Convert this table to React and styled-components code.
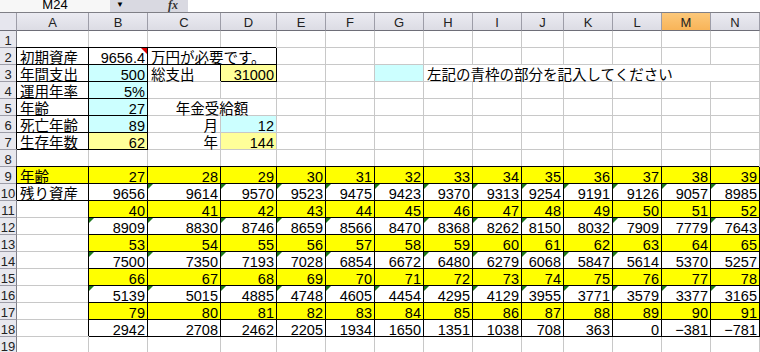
import React from 'react';
import styled, { createGlobalStyle, css } from 'styled-components';

const GlobalStyle = createGlobalStyle`
  html, body {
    margin: 0;
    padding: 0;
    background: #fff;
    overflow: hidden;
  }
  body {
    font-family: "Liberation Sans", "Noto Sans CJK JP", sans-serif;
  }
`;

const COLS = ['A', 'B', 'C', 'D', 'E', 'F', 'G', 'H', 'I', 'J', 'K', 'L', 'M', 'N'];
const WIDTHS = [72, 59, 73, 56, 49, 49, 49, 49, 49, 42, 49, 49, 49, 49];

const FILLS = {
  yellow: '#ffff00',
  cyan: '#ccffff',
  cream: '#ffff99',
};

const Sheet = styled.div`
  width: 760px;
  height: 352px;
  overflow: hidden;
`;

const FormulaBar = styled.div`
  display: flex;
  height: 12px;
  border-bottom: 1px solid #7f7f86;
  overflow: hidden;
  font-size: 13px;
  color: #000;
`;

const NameBox = styled.div`
  width: 110px;
  background: #f7f7f7;
  display: flex;
  align-items: flex-end;
  justify-content: center;
  line-height: 1;
  span { margin-bottom: 1px; }
`;

const BarButtons = styled.div`
  width: 78px;
  background: #d9d9e1;
  display: flex;
  align-items: flex-end;
  justify-content: space-between;
  padding: 0 10px 1px 6px;
  box-sizing: border-box;
`;

const Arrow = styled.span`
  font-size: 8px;
  line-height: 1;
  margin-bottom: 2px;
`;

const Fx = styled.span`
  font-family: "Liberation Serif", serif;
  font-style: italic;
  font-weight: bold;
  font-size: 12px;
  line-height: 1;
  color: #333;
`;

const FormulaInput = styled.div`
  flex: 1;
  background: #fff;
`;

const Grid = styled.div`
  display: grid;
  grid-template-columns: 17px ${WIDTHS.map((w) => `${w}px`).join(' ')};
  grid-template-rows: 18px;
  grid-auto-rows: 17px;
`;

const HeadBase = css`
  box-sizing: border-box;
  border-right: 1px solid #9d9da8;
  border-bottom: 1px solid #9d9da8;
  display: flex;
  align-items: center;
  justify-content: center;
  font-family: "Liberation Sans", sans-serif;
  font-size: 13px;
  color: #222;
  line-height: 1;
`;

const Corner = styled.div`
  ${HeadBase};
  background: #e6e6ee;
  border-bottom-color: #6e6e78;
`;

const ColHead = styled.div`
  ${HeadBase};
  padding-top: 1px;
  border-bottom-color: #6e6e78;
  background: ${(p) =>
    p.$active
      ? 'linear-gradient(#fcc87a, #f8b458)'
      : 'linear-gradient(#ebebf2, #dcdce4)'};
`;

const RowHead = styled.div`
  ${HeadBase};
  background: #e8e8ee;
  border-right-color: #7f7f88;
  padding-top: 3px;
`;

const Cell = styled.div`
  position: relative;
  box-sizing: border-box;
  grid-column: span ${(p) => p.$span || 1};
  border-right: 1px solid #c8c8c8;
  border-bottom: 1px solid #c8c8c8;
  background: ${(p) => (p.$fill ? FILLS[p.$fill] : '#fff')};
  display: flex;
  align-items: flex-end;
  justify-content: ${(p) =>
    p.$align === 'right' ? 'flex-end' : p.$align === 'center' ? 'center' : 'flex-start'};
  padding: 0 ${(p) => (p.$align === 'right' ? '2px' : '0')} 0 ${(p) => (p.$align === 'left' ? '3px' : '0')};
  font-size: 14.5px;
  line-height: 12px;
  color: #000;
  white-space: nowrap;
  ${(p) =>
    p.$boxed &&
    css`
      border-right-color: #000;
      border-bottom-color: #000;
      box-shadow: -1px -1px 0 #000;
    `}
`;

const ErrorMark = styled.span`
  position: absolute;
  top: 0;
  left: 0;
  width: 0;
  height: 0;
  border-top: 5px solid #1c7a1c;
  border-right: 5px solid transparent;
`;

const NoteMark = styled.span`
  position: absolute;
  top: 0;
  right: 0;
  width: 0;
  height: 0;
  border-top: 6px solid #e00000;
  border-left: 6px solid transparent;
`;

const empty = (n) => Array.from({ length: n }, () => ({}));
const num = (v, extra = {}) => ({ text: String(v).replace('-', '−'), align: 'right', ...extra });
const label = (t, extra = {}) => ({ text: t, align: 'left', ...extra });

const ages = (from) => Array.from({ length: 13 }, (_, i) => num(from + i, { fill: 'yellow', boxed: true }));
const money = (vals, marks) =>
  vals.map((v, i) => num(v, { boxed: true, mark: marks[i] ? 'error' : null }));

const rows = [
  empty(14),
  [
    label('初期資産', { boxed: true }),
    num('9656.4', { boxed: true, mark: 'note' }),
    label('万円が必要です。', { boxed: true, span: 2 }),
    ...empty(10),
  ],
  [
    label('年間支出', { boxed: true }),
    num(500, { boxed: true, fill: 'cyan' }),
    label('総支出'),
    num(31000, { boxed: true, fill: 'cream' }),
    ...empty(2),
    { fill: 'cyan' },
    label('左記の青枠の部分を記入してください', { span: 7 }),
  ],
  [label('運用年率', { boxed: true }), num('5%', { boxed: true, fill: 'cyan' }), ...empty(12)],
  [
    label('年齢', { boxed: true }),
    num(27, { boxed: true, fill: 'cyan' }),
    { text: '年金受給額', align: 'center', span: 2 },
    ...empty(10),
  ],
  [
    label('死亡年齢', { boxed: true }),
    num(89, { boxed: true, fill: 'cyan' }),
    num('月'),
    num(12, { fill: 'cyan' }),
    ...empty(10),
  ],
  [
    label('生存年数', { boxed: true }),
    num(62, { boxed: true, fill: 'cream' }),
    num('年'),
    num(144, { fill: 'cream' }),
    ...empty(10),
  ],
  empty(14),
  [label('年齢', { boxed: true, fill: 'yellow' }), ...ages(27)],
  [
    label('残り資産', { boxed: true }),
    ...money(
      [9656, 9614, 9570, 9523, 9475, 9423, 9370, 9313, 9254, 9191, 9126, 9057, 8985],
      [0, 1, 1, 1, 1, 1, 1, 1, 1, 1, 1, 1, 1]
    ),
  ],
  [{}, ...ages(40)],
  [
    {},
    ...money(
      [8909, 8830, 8746, 8659, 8566, 8470, 8368, 8262, 8150, 8032, 7909, 7779, 7643],
      [1, 1, 1, 1, 1, 0, 1, 1, 1, 0, 1, 0, 1]
    ),
  ],
  [{}, ...ages(53)],
  [
    {},
    ...money(
      [7500, 7350, 7193, 7028, 6854, 6672, 6480, 6279, 6068, 5847, 5614, 5370, 5257],
      [1, 1, 1, 1, 1, 0, 1, 1, 1, 1, 1, 0, 0]
    ),
  ],
  [{}, ...ages(66)],
  [
    {},
    ...money(
      [5139, 5015, 4885, 4748, 4605, 4454, 4295, 4129, 3955, 3771, 3579, 3377, 3165],
      [1, 1, 1, 1, 1, 1, 1, 1, 1, 1, 1, 1, 1]
    ),
  ],
  [{}, ...ages(79)],
  [
    {},
    ...money(
      [2942, 2708, 2462, 2205, 1934, 1650, 1351, 1038, 708, 363, 0, -381, -781],
      Array(13).fill(0)
    ),
  ],
  empty(14),
];

export default function App() {
  return (
    <Sheet>
      <GlobalStyle />
      <FormulaBar>
        <NameBox>
          <span>M24</span>
        </NameBox>
        <BarButtons>
          <Arrow>▼</Arrow>
          <Fx>fx</Fx>
        </BarButtons>
        <FormulaInput />
      </FormulaBar>
      <Grid>
        <Corner />
        {COLS.map((c) => (
          <ColHead key={c} $active={c === 'M'}>
            {c}
          </ColHead>
        ))}
        {rows.map((cells, r) => (
          <React.Fragment key={r}>
            <RowHead>{r + 1}</RowHead>
            {cells.map((cell, i) => (
              <Cell
                key={i}
                $span={cell.span}
                $fill={cell.fill}
                $align={cell.align}
                $boxed={cell.boxed}
              >
                {cell.mark === 'error' && <ErrorMark />}
                {cell.mark === 'note' && <NoteMark />}
                {cell.text}
              </Cell>
            ))}
          </React.Fragment>
        ))}
      </Grid>
    </Sheet>
  );
}
